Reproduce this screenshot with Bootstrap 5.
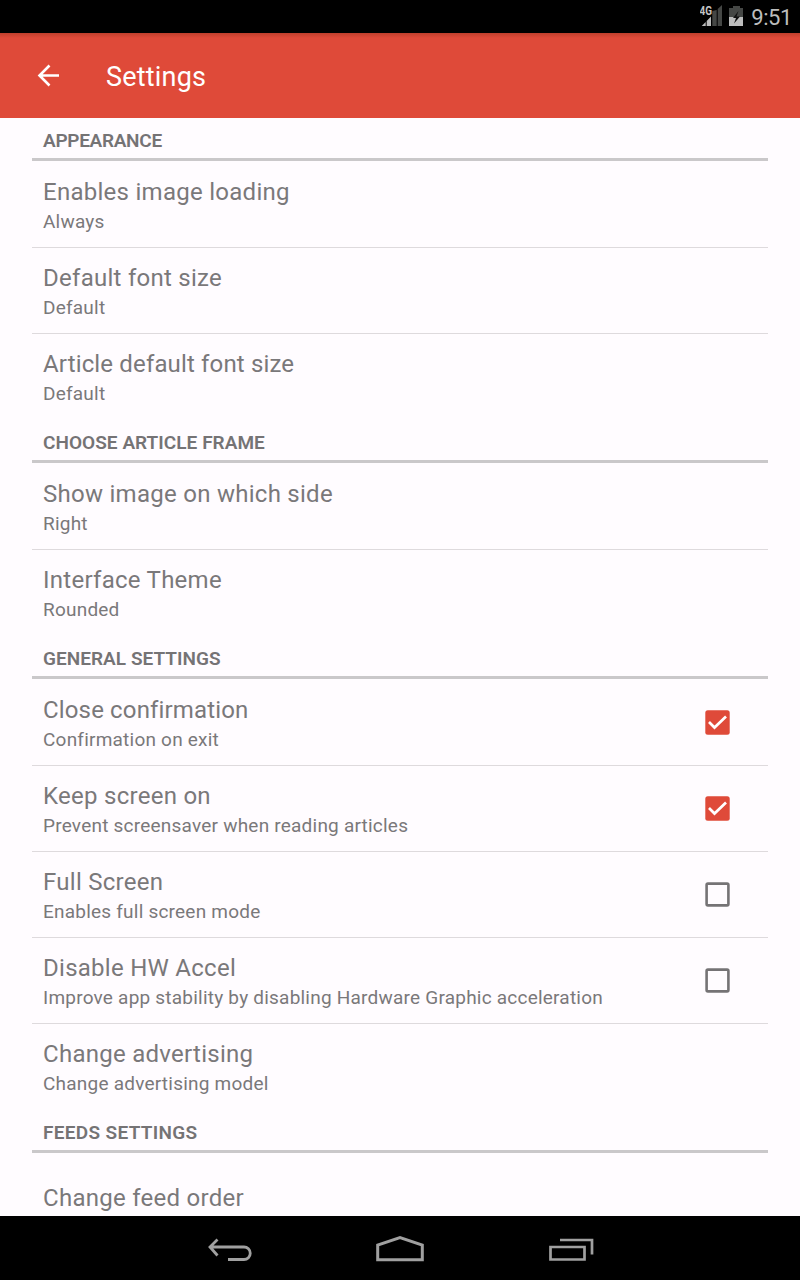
<!DOCTYPE html>
<html lang="en">
<head>
<meta charset="utf-8">
<meta name="viewport" content="width=device-width, initial-scale=1">
<title>Settings</title>
<link rel="stylesheet" href="https://cdn.jsdelivr.net/npm/bootstrap@5.3.0/dist/css/bootstrap.min.css">
<style>
body{font-family:Roboto,"Noto Sans",sans-serif;background:#fffcff;color:#757375;height:1280px}
svg{display:block;flex:none}
.status{height:33px;background:#000;color:#bdbdbd;padding-right:8px}
.clock{font-size:22px;line-height:33px;padding-top:1px;margin-left:7px;letter-spacing:-.4px}
.appbar{height:85px;background:linear-gradient(#bf3f2c,#df4a39 5px);color:#fff;padding-left:36px}
.appbar h1{font-size:27px;line-height:36px;font-weight:400;margin:2px 0 0 46px;letter-spacing:.2px}
.settings{padding:0 32px}
.section-title{height:44px;border-bottom:3px solid #cac8ca;padding:12px 11px 0;font-size:19px;line-height:24px;font-weight:600;letter-spacing:.04px}
.section-title.first{height:43px;padding-top:11px;letter-spacing:-.3px}
.section-title.last{letter-spacing:.32px}
.entry{height:86px;padding:15px 38px 0 11px}
.entry + .entry{border-top:1px solid #dedadd;padding-top:14px}
.entry-name{font-size:24px;line-height:32px;letter-spacing:.27px;color:#7a787a}
.entry-name.tight{letter-spacing:.15px}
.entry-note{font-size:19px;line-height:24px;letter-spacing:.22px;margin-top:2px;color:#7a787a}
.box{margin-top:16px}
.cut{padding-top:29px}
.navkeys{height:64px;background:#000}
</style>
</head>
<body class="d-flex flex-column overflow-hidden">
<div class="status d-flex justify-content-end flex-shrink-0">
  <svg width="44" height="33" viewBox="0 0 44 33">
    <path d="M1.700 26 5.700 22v4zM6.700 21 11 16.500V26H6.700z" fill="#bdbdbd"/>
    <path d="M12.300 15v-4l4.400-1v16h-4.400zM17.700 9l4.300-4v21h-4.300z" fill="#454745"/>
    <text x="-.5" y="15" font-size="12.500" font-weight="700" textLength="12.500" lengthAdjust="spacingAndGlyphs" fill="#c4c4c4">4G</text>
    <path d="M29 8h4V6h7v2h3v18H29z" fill="#454745"/>
    <path d="M29 17h14v9H29z" fill="#bdbdbd"/>
    <path d="M38.500 11 33 18h3l-2 5.500 6-7h-3.500z" fill="#111"/>
  </svg>
  <span class="clock">9:51</span>
</div>
<header class="appbar d-flex align-items-center flex-shrink-0">
  <svg width="24" height="24" viewBox="0 0 24 24" fill="none" stroke="#fff" stroke-width="2.600"><path d="M23 11.500H4M13.500 1.500l-10 10 10 10"/></svg>
  <h1>Settings</h1>
</header>
<main class="settings flex-grow-1 overflow-hidden">
  <h2 class="section-title first mb-0">APPEARANCE</h2>
  <div class="entry"><div class="entry-name">Enables image loading</div><div class="entry-note">Always</div></div>
  <div class="entry"><div class="entry-name">Default font size</div><div class="entry-note">Default</div></div>
  <div class="entry"><div class="entry-name tight">Article default font size</div><div class="entry-note">Default</div></div>
  <h2 class="section-title mb-0">CHOOSE ARTICLE FRAME</h2>
  <div class="entry"><div class="entry-name">Show image on which side</div><div class="entry-note">Right</div></div>
  <div class="entry"><div class="entry-name">Interface Theme</div><div class="entry-note">Rounded</div></div>
  <h2 class="section-title mb-0">GENERAL SETTINGS</h2>
  <div class="entry d-flex justify-content-between"><div><div class="entry-name tight">Close confirmation</div><div class="entry-note">Confirmation on exit</div></div>
    <svg class="box" width="25" height="25" viewBox="0 0 25 25"><rect x=".3" y=".3" width="24.400" height="24.400" rx="2.500" fill="#df4a39"/><path d="M4 12l5.500 5.500L21 6.500" fill="none" stroke="#fff" stroke-width="2.700"/></svg></div>
  <div class="entry d-flex justify-content-between"><div><div class="entry-name">Keep screen on</div><div class="entry-note">Prevent screensaver when reading articles</div></div>
    <svg class="box" width="25" height="25" viewBox="0 0 25 25"><rect x=".3" y=".3" width="24.400" height="24.400" rx="2.500" fill="#df4a39"/><path d="M4 12l5.500 5.500L21 6.500" fill="none" stroke="#fff" stroke-width="2.700"/></svg></div>
  <div class="entry d-flex justify-content-between"><div><div class="entry-name">Full Screen</div><div class="entry-note">Enables full screen mode</div></div>
    <svg class="box" width="25" height="25" viewBox="0 0 25 25"><rect x="1.600" y="1.600" width="21.800" height="21.800" rx="1.300" fill="none" stroke="#757375" stroke-width="2.600"/></svg></div>
  <div class="entry d-flex justify-content-between"><div><div class="entry-name">Disable HW Accel</div><div class="entry-note">Improve app stability by disabling Hardware Graphic acceleration</div></div>
    <svg class="box" width="25" height="25" viewBox="0 0 25 25"><rect x="1.600" y="1.600" width="21.800" height="21.800" rx="1.300" fill="none" stroke="#757375" stroke-width="2.600"/></svg></div>
  <div class="entry"><div class="entry-name">Change advertising</div><div class="entry-note">Change advertising model</div></div>
  <h2 class="section-title last mb-0">FEEDS SETTINGS</h2>
  <div class="entry cut"><div class="entry-name">Change feed order</div></div>
</main>
<nav class="navkeys d-flex justify-content-center flex-shrink-0">
  <svg width="800" height="64" viewBox="0 0 800 64" fill="none" stroke="#a0a0a0" stroke-width="2.700">
    <path d="M211 31h33a6 6 0 0 1 0 12.500H228M217.500 23.500 210 31l7.500 8.500" stroke-width="2.800"/>
    <path d="M377.700 43.700V29.200L400 21.700l22.300 7.500v14.500z" stroke-width="3"/>
    <path d="M550.500 31h34v12.500h-34zM560 24h32v14.500"/>
  </svg>
</nav>
<script src="https://cdn.jsdelivr.net/npm/bootstrap@5.3.0/dist/js/bootstrap.bundle.min.js"></script>
</body>
</html>
